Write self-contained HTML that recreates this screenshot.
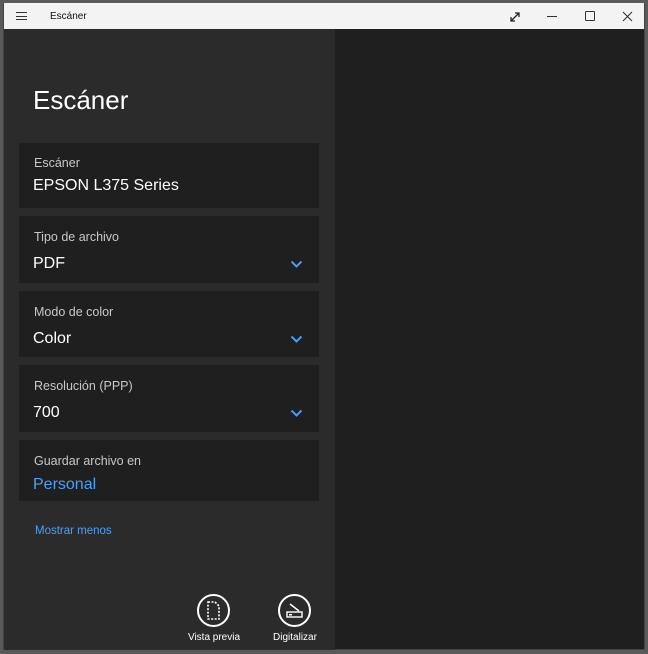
<!DOCTYPE html>
<html><head><style>
*{margin:0;padding:0;box-sizing:border-box}
body{width:648px;height:654px;background:#5a5a5a;font-family:"Liberation Sans",sans-serif;overflow:hidden;position:relative}
.win{position:absolute;left:3px;top:3px;width:642px;height:647px;background:#1f1f1f;border:1px solid #444;border-top:none}
.tb{position:absolute;left:0;top:0;width:100%;height:26px;background:#f3f3f3;color:#111;font-size:10px}
.panel{position:absolute;left:0;top:26px;width:331px;height:621px;background:#2b2b2b}
.card{position:absolute;left:15px;width:300px;background:#1f1f1f}
.lbl{position:absolute;left:15px;font-size:12.5px;color:#c8c8c8}
.val{position:absolute;left:14px;font-size:16px;color:#fff}
.chev{position:absolute;right:16px;width:13px;height:8px}
.btxt{position:absolute;font-size:10px;color:#fff;text-align:center;width:80px}
.circ{position:absolute;width:33px;height:33px;border:2px solid #fff;border-radius:50%}
</style></head><body>
<div class="win">
 <div class="tb">
  <div style="position:absolute;left:12px;top:9px;width:11px;height:8px;border-top:1px solid #333;border-bottom:1px solid #333"><div style="margin-top:3px;border-top:1px solid #333"></div></div>
  <div style="position:absolute;left:46px;top:8px">Escáner</div>
  <svg style="position:absolute;left:505px;top:8px" width="12" height="12"><path d="M2 10L10 2M6 2H10V6M2 6V10H6" stroke="#222" fill="none" stroke-width="1.3"/></svg>
  <div style="position:absolute;left:543px;top:13px;width:10px;border-top:1px solid #333"></div>
  <div style="position:absolute;left:581px;top:8px;width:10px;height:10px;border:1px solid #333;border-radius:1px"></div>
  <svg style="position:absolute;left:618px;top:8px" width="11" height="11"><path d="M1 1L10 10M10 1L1 10" stroke="#333" stroke-width="1.1"/></svg>
 </div>
 <div class="panel">
  <div style="position:absolute;left:29px;top:56px;font-size:26px;color:#fff">Escáner</div>
  <div class="card" style="top:114px;height:65px"><div class="lbl" style="top:13px">Escáner</div><div class="val" style="top:34px">EPSON L375 Series</div></div>
  <div class="card" style="top:187px;height:67px"><div class="lbl" style="top:14px">Tipo de archivo</div><div class="val" style="top:39px">PDF</div><svg class="chev" style="top:44px" viewBox="0 0 13 8"><path d="M1.5 1.5L6.5 6.5 11.5 1.5" stroke="#4a9cf0" stroke-width="2" fill="none"/></svg></div>
  <div class="card" style="top:262px;height:66px"><div class="lbl" style="top:14px">Modo de color</div><div class="val" style="top:39px">Color</div><svg class="chev" style="top:44px" viewBox="0 0 13 8"><path d="M1.5 1.5L6.5 6.5 11.5 1.5" stroke="#4a9cf0" stroke-width="2" fill="none"/></svg></div>
  <div class="card" style="top:336px;height:67px"><div class="lbl" style="top:14px">Resolución (PPP)</div><div class="val" style="top:39px">700</div><svg class="chev" style="top:44px" viewBox="0 0 13 8"><path d="M1.5 1.5L6.5 6.5 11.5 1.5" stroke="#4a9cf0" stroke-width="2" fill="none"/></svg></div>
  <div class="card" style="top:411px;height:61px"><div class="lbl" style="top:14px">Guardar archivo en</div><div class="val" style="top:36px;color:#4aa0f5">Personal</div></div>
  <div style="position:absolute;left:31px;top:496px;font-size:11.5px;color:#4aa0f5">Mostrar menos</div>
  <div class="circ" style="left:193px;top:565px"><svg width="29" height="29" style="position:absolute;left:0;top:0"><path d="M9 6H16L20 10V23H9Z" stroke="#fff" stroke-width="1.6" fill="none" stroke-dasharray="2 1.5"/></svg></div>
  <div class="btxt" style="left:170px;top:603px">Vista previa</div>
  <div class="circ" style="left:274px;top:565px"><svg width="29" height="29" style="position:absolute;left:0;top:0"><path d="M10 8L19 15" stroke="#fff" stroke-width="1.5"/><rect x="7" y="16" width="15" height="5" fill="none" stroke="#fff" stroke-width="1.4"/><rect x="9" y="18" width="3" height="1.5" fill="#fff"/></svg></div>
  <div class="btxt" style="left:251px;top:603px">Digitalizar</div>
 </div>
</div>
</body></html>
